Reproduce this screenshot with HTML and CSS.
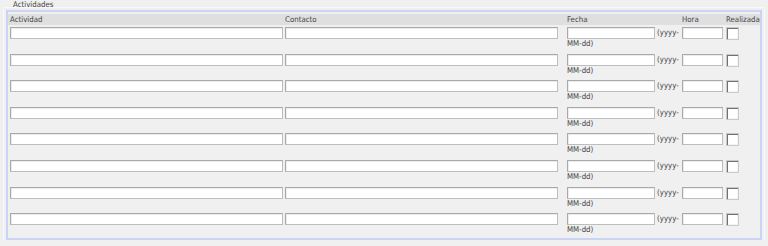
FILE: index.html
```html
<!DOCTYPE html>
<html lang="es">
<head>
    <meta charset="UTF-8">
    <title>Actividades</title>
    <link rel="stylesheet" href="styles.css">
</head>
<body>
    <div class="legend">Actividades</div>
    <div class="box">
        <div class="grid head">
            <div class="cell">Actividad</div>
            <div class="cell">Contacto</div>
            <div class="cell">Fecha</div>
            <div class="cell">Hora</div>
            <div class="cell">Realizada</div>
        </div>
        <div class="grid row">
            <div class="cell"><input type="text" class="field wide"></div>
            <div class="cell"><input type="text" class="field wide"></div>
            <div class="cell"><div class="date-line"><input type="text" class="field date"><span class="hint">(yyyy-</span></div><div class="hint-line">MM-dd)</div></div>
            <div class="cell"><input type="text" class="field time"></div>
            <div class="cell"><input type="checkbox" class="check"></div>
        </div>
        <div class="grid row">
            <div class="cell"><input type="text" class="field wide"></div>
            <div class="cell"><input type="text" class="field wide"></div>
            <div class="cell"><div class="date-line"><input type="text" class="field date"><span class="hint">(yyyy-</span></div><div class="hint-line">MM-dd)</div></div>
            <div class="cell"><input type="text" class="field time"></div>
            <div class="cell"><input type="checkbox" class="check"></div>
        </div>
        <div class="grid row">
            <div class="cell"><input type="text" class="field wide"></div>
            <div class="cell"><input type="text" class="field wide"></div>
            <div class="cell"><div class="date-line"><input type="text" class="field date"><span class="hint">(yyyy-</span></div><div class="hint-line">MM-dd)</div></div>
            <div class="cell"><input type="text" class="field time"></div>
            <div class="cell"><input type="checkbox" class="check"></div>
        </div>
        <div class="grid row">
            <div class="cell"><input type="text" class="field wide"></div>
            <div class="cell"><input type="text" class="field wide"></div>
            <div class="cell"><div class="date-line"><input type="text" class="field date"><span class="hint">(yyyy-</span></div><div class="hint-line">MM-dd)</div></div>
            <div class="cell"><input type="text" class="field time"></div>
            <div class="cell"><input type="checkbox" class="check"></div>
        </div>
        <div class="grid row">
            <div class="cell"><input type="text" class="field wide"></div>
            <div class="cell"><input type="text" class="field wide"></div>
            <div class="cell"><div class="date-line"><input type="text" class="field date"><span class="hint">(yyyy-</span></div><div class="hint-line">MM-dd)</div></div>
            <div class="cell"><input type="text" class="field time"></div>
            <div class="cell"><input type="checkbox" class="check"></div>
        </div>
        <div class="grid row">
            <div class="cell"><input type="text" class="field wide"></div>
            <div class="cell"><input type="text" class="field wide"></div>
            <div class="cell"><div class="date-line"><input type="text" class="field date"><span class="hint">(yyyy-</span></div><div class="hint-line">MM-dd)</div></div>
            <div class="cell"><input type="text" class="field time"></div>
            <div class="cell"><input type="checkbox" class="check"></div>
        </div>
        <div class="grid row">
            <div class="cell"><input type="text" class="field wide"></div>
            <div class="cell"><input type="text" class="field wide"></div>
            <div class="cell"><div class="date-line"><input type="text" class="field date"><span class="hint">(yyyy-</span></div><div class="hint-line">MM-dd)</div></div>
            <div class="cell"><input type="text" class="field time"></div>
            <div class="cell"><input type="checkbox" class="check"></div>
        </div>
        <div class="grid row">
            <div class="cell"><input type="text" class="field wide"></div>
            <div class="cell"><input type="text" class="field wide"></div>
            <div class="cell"><div class="date-line"><input type="text" class="field date"><span class="hint">(yyyy-</span></div><div class="hint-line">MM-dd)</div></div>
            <div class="cell"><input type="text" class="field time"></div>
            <div class="cell"><input type="checkbox" class="check"></div>
        </div>
    </div>
</body>
</html>
```

FILE: styles.css
```css
body {
    margin: 0;
    background-color: #f0f0f0;
    font-family: "DejaVu Sans Condensed", "DejaVu Sans", sans-serif;
    font-stretch: condensed;
    font-size: 7.8px;
    color: #444;
}
.legend {
    height: 10px;
    line-height: 10px;
    padding-left: 13px;
}
.box {
    margin: 0 6px;
    border: 2px solid #cbd4f6;
    padding-top: 2px;
    box-shadow: 0 0 0 2px #f0f0f0, 0 0 0 3px #f8f8f8;
}
.grid {
    display: grid;
    grid-template-columns: 275px 282px 115px 44px 1fr;
    padding-left: 2px;
}
.head {
    background-color: #dfdfdf;
    height: 11px;
    line-height: 11px;
}
.row {
    height: 26.6px;
    box-sizing: border-box;
    padding-top: 2px;
    align-items: start;
}
.field {
    display: block;
    box-sizing: border-box;
    height: 12px;
    margin: 0;
    padding: 0 2px;
    background-color: white;
    border: 1px solid #bdbdbd;
    border-top-color: #a9a9a9;
    border-left-color: #a9a9a9;
    box-shadow: inset 1px 1px 0 #ececec;
    font: inherit;
}
.wide {
    width: 273px;
}
.date {
    width: 88px;
}
.time {
    width: 41px;
}
.date-line {
    display: flex;
    align-items: center;
    white-space: nowrap;
}
.hint {
    margin-left: 2px;
    line-height: 12px;
}
.hint-line {
    line-height: 10px;
    height: 10px;
}
.check {
    appearance: none;
    -webkit-appearance: none;
    display: block;
    box-sizing: border-box;
    width: 13px;
    height: 13px;
    margin: 0;
    background-color: white;
    border: 1px solid #cacaca;
    box-shadow: inset 1px 1px 0 #707070, inset -1px -1px 0 #f4f4f4;
}
```
